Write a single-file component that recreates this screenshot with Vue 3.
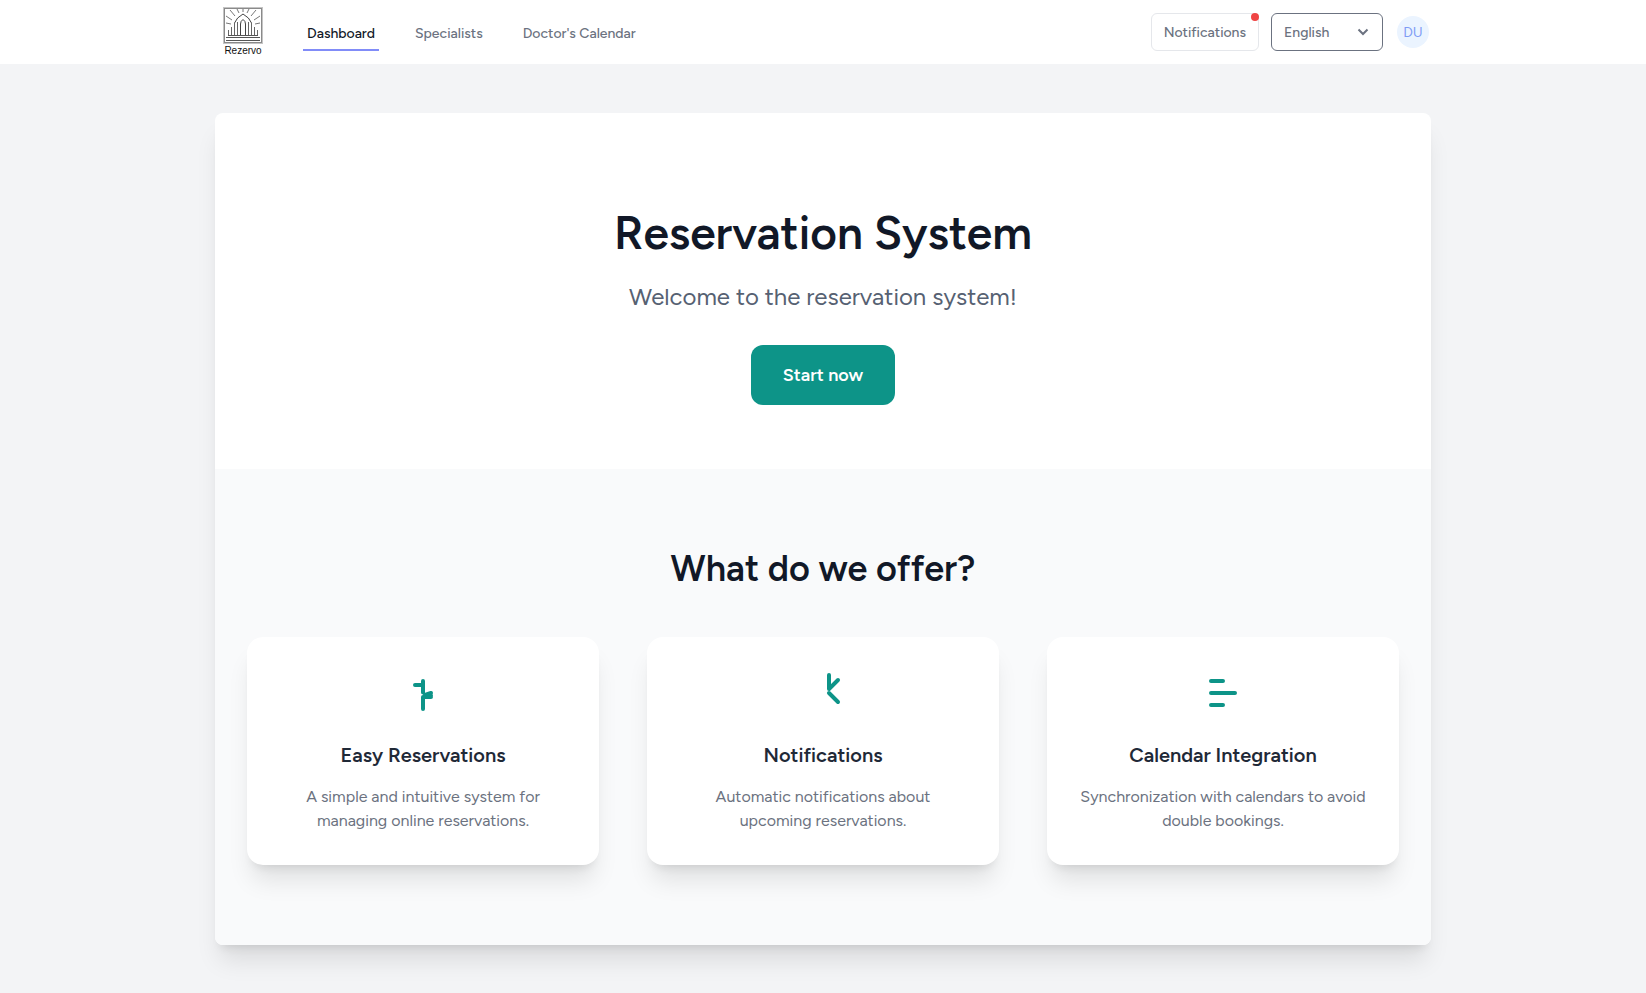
<script setup>
import { ref } from 'vue'

const language = ref('English')
const links = [
  { label: 'Dashboard', active: true },
  { label: 'Specialists', active: false },
  { label: "Doctor's Calendar", active: false },
]
const features = [
  {
    title: 'Easy Reservations',
    text: 'A simple and intuitive system for managing online reservations.',
    icon: 'M8 8h4M12 6v5.800M13 13l3-1M13 13.300h3M12 20v-6h4',
  },
  {
    title: 'Notifications',
    text: 'Automatic notifications about upcoming reservations.',
    icon: 'M15 3v7l4.5-4.5M15 12l4.5 4.5',
  },
  {
    title: 'Calendar Integration',
    text: 'Synchronization with calendars to avoid double bookings.',
    icon: 'M6 6h6M6 12h12M6 18h6',
  },
]
</script>

<template>
  <div class="page">
    <header class="topbar">
      <div class="bar">
        <a href="#" class="logo" aria-label="Rezervo home">
          <svg width="40" height="37" viewBox="0 0 40 37" fill="none" aria-hidden="true">
            <rect x="1" y="1" width="38" height="35" stroke="#c4c4c4" stroke-width="2" />
            <rect x="1.5" y="1.5" width="37" height="34" stroke="#8a8a8a" />
            <path d="M5 28.500h30M3 30.500h34M3 33.500h34" stroke="#555" />
            <path
              d="M5.500 28v-5M8.500 28v-8M11.500 28V16M14.500 28V15M25.500 28V15M28.500 28V16M31.500 28v-8M34.500 28v-5"
              stroke="#666"
            />
            <path
              d="M17.500 28V17q0-3 2.500-4.500 2.500 1.500 2.500 4.500v11M11.500 16q2-5.500 8.500-9 6.500 3.500 8.500 9"
              stroke="#444"
            />
            <path
              d="M20 2v3M14 2l2 4M26 2l-2 4M7 3l5 6M33 3l-5 6M3 9l6 4M37 9l-6 4M3 16l5 1M37 16l-5 1"
              stroke="#777"
            />
          </svg>
          <span>Rezervo</span>
        </a>
        <nav class="links">
          <a
            v-for="link in links"
            :key="link.label"
            href="#"
            :class="{ active: link.active }"
            >{{ link.label }}</a
          >
        </nav>
        <div class="tools">
          <button type="button" class="notify">Notifications<i class="dot"></i></button>
          <div class="picker">
            <select v-model="language" aria-label="Language">
              <option>English</option>
              <option>Polski</option>
            </select>
            <svg
              width="20"
              height="20"
              viewBox="0 0 20 20"
              fill="none"
              stroke="#6b7280"
              stroke-width="2"
              aria-hidden="true"
            >
              <path d="M5.500 7.500l4.500 4.500 4.500-4.500" />
            </svg>
          </div>
          <button type="button" class="avatar" aria-label="User menu">DU</button>
        </div>
      </div>
    </header>

    <main class="panel">
      <section class="hero">
        <h1>Reservation System</h1>
        <p>Welcome to the reservation system!</p>
        <a href="#" class="start">Start now</a>
      </section>
      <section class="offer">
        <h2>What do we offer?</h2>
        <div class="cards">
          <article v-for="f in features" :key="f.title" class="card">
            <svg
              width="48"
              height="48"
              viewBox="0 0 24 24"
              fill="none"
              stroke="#0d9488"
              stroke-width="2"
              stroke-linecap="round"
              stroke-linejoin="round"
              aria-hidden="true"
            >
              <path :d="f.icon" />
            </svg>
            <h3>{{ f.title }}</h3>
            <p>{{ f.text }}</p>
          </article>
        </div>
      </section>
    </main>
  </div>
</template>

<style>
body {
  background: #f3f4f6;
}
</style>

<style scoped>
.page,
.page * {
  box-sizing: border-box;
}
.page {
  min-height: 100vh;
  padding-bottom: 48px;
  background: #f3f4f6;
  color: #111827;
  font-family: Figtree, Lato, 'Open Sans', sans-serif;
}
h1,
h2,
h3,
p {
  margin: 0;
}
a {
  text-decoration: none;
}
.topbar {
  background: #fff;
  border-bottom: 1px solid #f3f4f6;
}
.bar {
  display: flex;
  align-items: center;
  max-width: 1280px;
  height: 64px;
  margin: 0 auto;
  padding: 0 32px 0 40px;
}
.logo {
  display: flex;
  flex-direction: column;
  align-items: center;
  width: 40px;
  font: 10px/12px 'Liberation Sans', Arial, sans-serif;
  color: #111;
}
.logo span {
  padding-top: 1px;
}
.links {
  display: flex;
  align-self: stretch;
  gap: 32px;
  margin-left: 40px;
}
.links a {
  padding: 24px 4px 5px;
  margin-bottom: 13px;
  border-bottom: 2px solid transparent;
  font-size: 14px;
  line-height: 20px;
  font-weight: 500;
  color: #6b7280;
}
.links .active {
  color: #111827;
  border-color: #818cf8;
}
.tools {
  display: flex;
  align-items: center;
  gap: 12px;
  margin-left: auto;
}
.notify {
  position: relative;
  height: 38px;
  padding: 0 12px;
  border: 1px solid #e5e7eb;
  border-radius: 6px;
  background: #fff;
  font: inherit;
  font-size: 14px;
  font-weight: 500;
  color: #6b7280;
}
.dot {
  position: absolute;
  top: -1px;
  right: -1px;
  width: 8px;
  height: 8px;
  border-radius: 50%;
  background: #ef4444;
}
.picker {
  position: relative;
}
.picker select {
  display: block;
  width: 112px;
  height: 38px;
  padding: 0 36px 0 12px;
  border: 1px solid #6b7280;
  border-radius: 6px;
  appearance: none;
  background: #fff;
  font: inherit;
  font-size: 14px;
  font-weight: 500;
  color: #6b7280;
}
.picker svg {
  position: absolute;
  top: 9px;
  right: 10px;
  pointer-events: none;
}
.avatar {
  width: 32px;
  height: 32px;
  margin: 0 2px;
  padding: 0;
  border: 0;
  border-radius: 50%;
  background: #ebf4ff;
  font: inherit;
  font-size: 14px;
  color: #7f9cf5;
}
.panel {
  max-width: 1216px;
  margin: 48px auto 0;
  overflow: hidden;
  border-radius: 8px;
  background: #fff;
  box-shadow: 0 20px 25px -5px rgba(0, 0, 0, 0.1), 0 8px 10px -6px rgba(0, 0, 0, 0.1);
  text-align: center;
}
.hero {
  display: flex;
  flex-direction: column;
  align-items: center;
  padding: 96px 32px 64px;
}
.hero h1 {
  font-size: 46px;
  line-height: 48px;
  font-weight: 600;
}
.hero p {
  margin-top: 24px;
  font-size: 24px;
  line-height: 32px;
  color: #566172;
}
.start {
  margin-top: 32px;
  padding: 16px 32px;
  border-radius: 12px;
  background: #0d9488;
  color: #fff;
  font-size: 18px;
  line-height: 28px;
  font-weight: 600;
}
.offer {
  padding: 80px 32px;
  background: #f9fafb;
}
.offer h2 {
  font-size: 36px;
  line-height: 40px;
  font-weight: 600;
}
.cards {
  display: grid;
  grid-template-columns: repeat(3, 1fr);
  gap: 48px;
  margin-top: 48px;
}
.card {
  padding: 32px;
  border-radius: 16px;
  background: #fff;
  box-shadow: 0 20px 25px -5px rgba(0, 0, 0, 0.1), 0 8px 10px -6px rgba(0, 0, 0, 0.1);
}
.card svg {
  display: block;
  margin: 0 auto 24px;
}
.card h3 {
  margin-bottom: 16px;
  font-size: 20px;
  line-height: 28px;
  font-weight: 600;
  color: #1f2937;
}
.card p {
  font-size: 16px;
  line-height: 24px;
  color: #6b7280;
}
</style>
